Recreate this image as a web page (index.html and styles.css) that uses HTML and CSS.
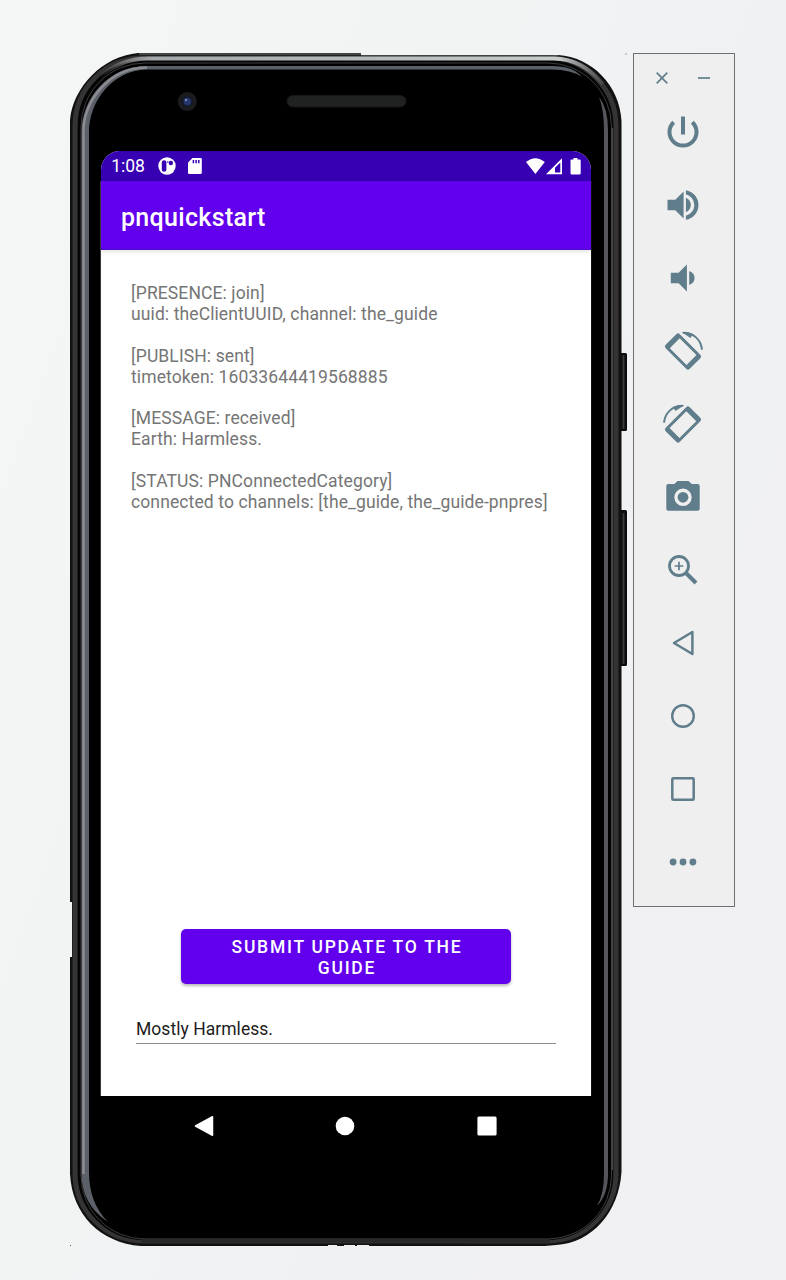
FILE: index.html
```html
<!DOCTYPE html>
<html lang="en">
<head>
<meta charset="utf-8">
<title>pnquickstart</title>
<link rel="stylesheet" href="styles.css">
</head>
<body>
<main class="stage">
  <section class="phone">
    <svg class="frame" viewBox="70 53 557 1194" aria-hidden="true">
      <defs>
        <linearGradient id="top" x1="100" x2="610" y1="0" y2="0" gradientUnits="userSpaceOnUse">
          <stop offset="0" stop-color="#b9bec0" stop-opacity="0"/><stop offset=".1" stop-color="#a3a7a9"/><stop offset=".5" stop-color="#b4babb"/><stop offset=".9" stop-color="#c8cccd"/><stop offset="1" stop-color="#b9bec0" stop-opacity="0"/>
        </linearGradient>
      </defs>
      <path d="M619 353h6.500q1.500 0 1.500 1.500v75q0 1.500-1.500 1.500H619zM619 510h6.500q1.500 0 1.500 1.500v153q0 1.500-1.500 1.500H619z" fill="#0b0b0b"/>
      <path d="M623.500 355v74M623.500 513v151" stroke="#3b3938" stroke-width="2"/>
      <path d="M138 53H361V55H558C592 57 620 86 621.500 121V1172C619 1212 592 1243 556 1245L545 1246H369V1245H357V1246H355V1245H344V1246H337V1245H328V1246H141C100 1243 72 1214 70 1174V957H72V902H70V120C73 87 103 56 138 53Z" fill="#111"/>
      <path d="M139 54H361M361 55.700H558" stroke="#555" stroke-width="1.500"/>
      <rect x="75" y="58" width="541" height="1183" rx="68" fill="none" stroke="#353333" stroke-width="5"/>
      <rect x="79.500" y="61.500" width="532" height="1177" rx="64" fill="none" stroke="#050505" stroke-width="3"/>
      <path d="M98 79Q119 58.500 148 58.500H554Q582 58.500 603 84" fill="none" stroke="url(#top)" stroke-width="4"/>
      <rect x="81" y="63" width="530.500" height="1176" rx="64" fill="#000" stroke="#3d3c3d" stroke-width="1"/>
      <path d="M612 128V1170" stroke="#454445" stroke-width="2"/>
      <path d="M108 1222Q81 1204 81.500 1172V132C81.500 100 107 66 147 66H552Q573 66 582 77Q571 69.500 552 69.500H147C113 70 89 101 89 132V1172Q89 1203 108 1222Z" fill="#5c6169"/>
      <path d="M83.500 1174V132C83.500 101 109 67.500 147 67.500" fill="none" stroke="#8a8c91" stroke-width="2.500"/>
      <path d="M599 97Q608 108 608 130V1174Q608 1195 597 1206Q604 1194 604 1174V130Q604 110 599 97Z" fill="#55555b"/>
      <path d="M141 1240.500H550" stroke="#292828" stroke-width="4"/>
      <path d="M100.500 181V1096M590.800 181V1096" stroke="#555" stroke-width=".7"/>
      <circle cx="187.300" cy="101.500" r="9.500" fill="#1c1c1e"/>
      <circle cx="187.300" cy="101.500" r="5.500" fill="#141a2c"/>
      <circle cx="187.300" cy="101.500" r="3.700" fill="#27376e"/>
      <circle cx="186" cy="100" r="1.200" fill="#6f86b5"/>
      <rect x="287" y="95.500" width="119" height="11.500" rx="5.750" fill="#202121" stroke="#171717"/>
      <path d="M70 1245.500h1M625.500 54h1" stroke="#555"/>
    </svg>
    <div class="screen">
      <div class="status">
        <span class="clock">1:08</span>
        <svg class="app-icon" viewBox="0 0 18 18"><circle cx="9" cy="9" r="8.700" fill="#fff"/><rect x="3.800" y="3.200" width="4.600" height="11.600" rx="2.300" fill="#3700b3"/><circle cx="12.800" cy="6" r="2.200" fill="#3700b3"/><circle cx="9.800" cy="5" r=".8" fill="#3700b3"/></svg>
        <svg class="sd-icon" viewBox="0 0 14 16"><path d="M4.500 0H12.500Q13.800 0 13.800 1.300V14.700Q13.800 16 12.500 16H1.300Q0 16 0 14.700V4.500Z" fill="#fff"/><path d="M5.400 2v3.200M8.100 2v3.200M10.800 2v3.200" stroke="#3700b3" stroke-width="1.500"/></svg>
        <svg class="signals" viewBox="0 0 55 17"><path d="M0 4Q9.400-3.700 18.800 4L9.400 16Z" fill="#fff"/><path fill="#fff" fill-rule="evenodd" d="M20 16.200L36 .3V16.200ZM29 14.400H34.300V4.500L29 9.700Z"/><path fill="#fff" d="M47.500 0h4v1.500h2q1.200 0 1.200 1.200v12.600q0 1.200-1.200 1.200h-7.800q-1.200 0-1.200-1.200V2.700q0-1.200 1.200-1.200h1.800z"/></svg>
      </div>
      <header class="appbar">pnquickstart</header>
      <div class="content">
        <div class="log">
          <p>[PRESENCE: join]<br>uuid: theClientUUID, channel: the_guide</p>
          <p>[PUBLISH: sent]<br>timetoken: 16033644419568885</p>
          <p>[MESSAGE: received]<br>Earth: Harmless.</p>
          <p>[STATUS: PNConnectedCategory]<br>connected to channels: [the_guide, the_guide-pnpres]</p>
        </div>
        <button class="submit">SUBMIT UPDATE TO THE<br>GUIDE</button>
        <div class="entry">Mostly Harmless.</div>
      </div>
    </div>
    <nav class="navbar">
      <svg viewBox="-12 -12 24 24"><path d="M-8.500 0L8.500-9.300V9.300Z" fill="#fff" stroke="#fff" stroke-width="1.500" stroke-linejoin="round"/></svg>
      <svg viewBox="-12 -12 24 24"><circle r="9.300" fill="#fff"/></svg>
      <svg viewBox="-12 -12 24 24"><rect x="-9.600" y="-9.600" width="19.200" height="19.200" rx="1.500" fill="#fff"/></svg>
    </nav>
  </section>
  <aside class="tools">
    <div class="window-controls">
      <svg viewBox="-7 -7 14 14"><path class="line thin" d="M-5.300-5.300L5.300 5.300M5.300-5.300L-5.300 5.300"/></svg>
      <svg viewBox="-7 -7 14 14"><path class="line thin" d="M-6 0H6"/></svg>
    </div>
    <svg class="tool" viewBox="-24 -24 48 48"><path class="line" stroke-width="4" d="M-9.300-9.700A13.500 13.500 0 1 0 9.300-9.700M0-15.500V2.500"/></svg>
    <svg class="tool" viewBox="-24 -24 48 48"><path class="solid" d="M-15.500-5.200H-7.700L.6-13.400V13.400L-7.700 5.200H-15.500ZM2.900-7.200Q7.800-5 7.800 0T2.900 7.200ZM2.900-14.800A15 15 0 0 1 2.900 14.800V10.700A11 11 0 0 0 2.900-10.700Z"/></svg>
    <svg class="tool" viewBox="-24 -24 48 48"><path class="solid" d="M-12.200-5.200H-4.400L3.900-13.400V13.400L-4.400 5.200H-12.200ZM6.200-7Q11.600-5 11.600 0T6.200 7Z"/></svg>
    <svg class="tool" viewBox="-24 -24 48 48"><g id="rotate"><path class="solid" fill-rule="evenodd" transform="translate(0 .5) rotate(45)" d="M-14.500-10H14.500Q17-10 17-7.500V7.500Q17 10 14.500 10H-14.500Q-17 10-17 7.500V-7.500Q-17-10-14.500-10ZM-11.700-7V7H12V-7Z"/><path class="line" stroke-width="2" d="M19-1.300C18-11 11-18.200 0-18.200"/><path class="solid" d="M-1.500-19L5-18.800L10-17L7.500-13Z"/></g></svg>
    <svg class="tool" viewBox="-24 -24 48 48"><use href="#rotate" transform="scale(-1 1)"/></svg>
    <svg class="tool" viewBox="-24 -24 48 48"><path class="solid" fill-rule="evenodd" d="M-5.500-16H5.500L8.800-13H14.700Q16.700-13 16.700-11V11.700Q16.700 13.700 14.700 13.700H-14.700Q-16.700 13.700-16.700 11.700V-11Q-16.700-13-14.700-13H-8.800ZM0-8.400A8.700 8.700 0 1 0 0 9A8.700 8.700 0 1 0 0-8.400Z"/><circle class="solid" cy=".3" r="5.400"/></svg>
    <svg class="tool" viewBox="-24 -24 48 48"><circle class="line" cx="-4" cy="-4" r="9.500" stroke-width="2.800"/><path class="line" stroke-width="1.700" d="M-8.300-4H.3M-4-8.300V.3"/><path class="line" stroke-width="4" d="M3 3L13 13"/></svg>
    <svg class="tool" viewBox="-24 -24 48 48"><path class="line" stroke-width="2.500" stroke-linejoin="round" d="M-9 0L9.400-11V11Z"/></svg>
    <svg class="tool" viewBox="-24 -24 48 48"><circle class="line" r="10.800" stroke-width="2.400"/></svg>
    <svg class="tool" viewBox="-24 -24 48 48"><rect class="line" x="-10.700" y="-10.700" width="21.400" height="21.400" rx="1" stroke-width="2.500"/></svg>
    <svg class="tool" viewBox="-24 -24 48 48"><g class="solid"><circle cx="-9.900" r="3.400"/><circle r="3.400"/><circle cx="9.900" r="3.400"/></g></svg>
  </aside>
</main>
</body>
</html>
```
FILE: styles.css
```css
* { box-sizing: border-box; }

body {
  margin: 0;
  font-family: Roboto, sans-serif;
  background: linear-gradient(110deg, #f5f7f6 0%, #f2f4f4 35%, #f0f1f3 60%, #f0f0f2 100%);
}

.stage {
  display: flex;
  align-items: flex-start;
  gap: 6px;
  width: 786px;
  height: 1280px;
  padding: 53px 0 0 70px;
}

.phone {
  position: relative;
  width: 557px;
  height: 1194px;
  padding: 98px 0 0 31px;
}

.frame {
  position: absolute;
  inset: 0;
  width: 557px;
  height: 1194px;
}

.screen {
  position: relative;
  display: flex;
  flex-direction: column;
  width: 489.5px;
  height: 945px;
  overflow: hidden;
  border-radius: 19px 19px 0 0;
  background: #fff;
}

.status {
  display: flex;
  flex: none;
  align-items: center;
  height: 30px;
  padding: 0 9.500px 0 10.200px;
  background: #3700b3;
  color: #fff;
}

.clock {
  width: 46.800px;
  font-size: 17.500px;
  line-height: 31px;
}

.app-icon { width: 18px; height: 18px; }
.sd-icon { width: 14px; height: 16px; margin-left: 12px; }
.signals { width: 55px; height: 17px; margin-left: auto; }

.appbar {
  z-index: 1;
  flex: none;
  height: 69px;
  padding-left: 20px;
  background: #6200ee;
  border-bottom: 1px solid #4a12c4;
  box-shadow: 0 1px 5px rgba(0, 0, 0, .15);
  color: #fff;
  font-size: 25px;
  font-weight: 500;
  letter-spacing: .32px;
  line-height: 74px;
}

.content {
  display: flex;
  flex: 1;
  flex-direction: column;
  padding: 33.300px 35px 52.500px 30px;
}

.log {
  flex: 1;
  color: #757575;
  font-size: 17.500px;
  letter-spacing: .11px;
  line-height: 20.850px;
  white-space: nowrap;
}

.log p { margin: 0 0 20.850px; }

.submit {
  width: 330px;
  height: 55px;
  margin-left: 50px;
  padding: 2px 0 0 2px;
  border: 0;
  border-radius: 5px;
  background: #6200ee;
  box-shadow: 0 2px 3px rgba(0, 0, 0, .28);
  color: #fff;
  font: 500 17.500px/21px Roboto, sans-serif;
  letter-spacing: 1.740px;
}

.entry {
  height: 31px;
  margin: 28.500px 0 0 5px;
  border-bottom: 1.500px solid #8c8c8c;
  color: #1c1c1c;
  font-size: 17.500px;
  letter-spacing: .04px;
  line-height: 32px;
}

.navbar {
  position: relative;
  display: flex;
  justify-content: space-between;
  width: 307px;
  margin: 18px 0 0 90.500px;
}

.navbar svg { width: 24px; height: 24px; }

.tools {
  display: flex;
  flex-direction: column;
  align-items: center;
  width: 102px;
  height: 854px;
  padding-right: 1.600px;
  border: 1px solid #6f6f70;
  background: #efefef;
}

.window-controls {
  display: flex;
  justify-content: space-between;
  align-items: center;
  width: 56px;
  height: 41.400px;
  padding-top: 7px;
}

.window-controls svg { width: 14px; height: 14px; }
.tool { flex: none; width: 48px; height: 48px; margin: 12.500px 0; }
.line { fill: none; stroke: #607d8b; }
.thin { stroke-width: 1.700px; }
.solid { fill: #607d8b; }
```
